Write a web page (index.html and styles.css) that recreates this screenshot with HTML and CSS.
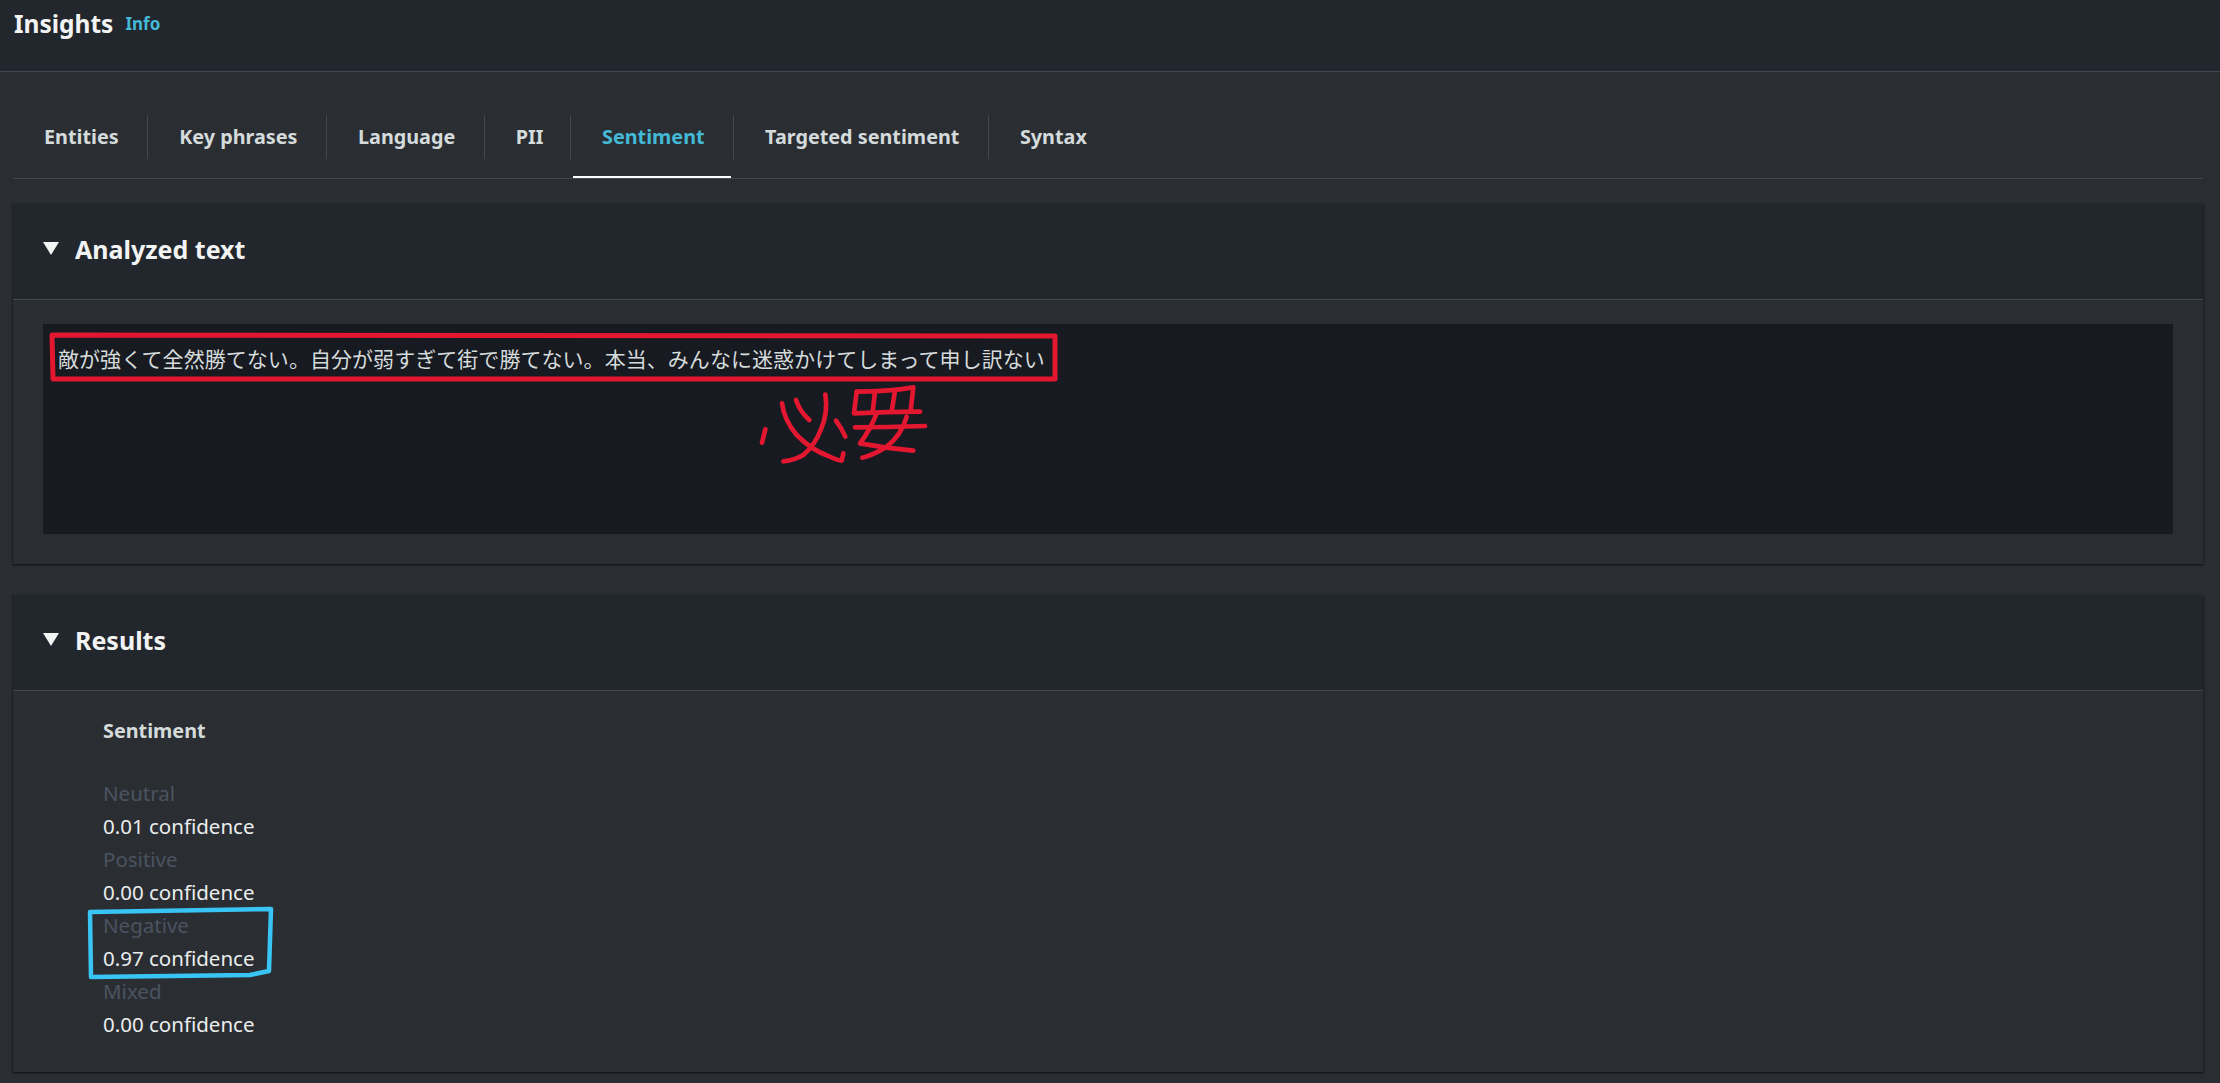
FILE: index.html
```html
<!DOCTYPE html>
<html lang="en">
  <head>
    <title>Insights</title>
    <meta charset="UTF-8" />
    <link rel="stylesheet" href="styles.css">
  </head>
  <body>
    <header class="top">
      <h1>Insights</h1>
      <a class="info">Info</a>
    </header>

    <div class="wrapper">
      <nav class="tabs">
        <a class="tab">Entities</a>
        <a class="tab">Key phrases</a>
        <a class="tab">Language</a>
        <a class="tab short">PII</a>
        <a class="tab active">Sentiment</a>
        <a class="tab">Targeted sentiment</a>
        <a class="tab last">Syntax</a>
      </nav>

      <section class="panel first">
        <div class="panel-head">
          <span class="caret"></span>
          <h2>Analyzed text</h2>
        </div>
        <div class="panel-body">
          <div class="textbox">
            <p>敵が強くて全然勝てない。自分が弱すぎて街で勝てない。本当、みんなに迷惑かけてしまって申し訳ない</p>
            <svg class="mark-red" viewBox="0 0 1020 56">
              <path d="M3 3 L1006 4 L1006 47 L4 47 Z" />
            </svg>
            <svg class="scribble" viewBox="0 0 780 360" role="img" aria-label="必要">
              <path d="M196 178 L186 218" />
              <path d="M246 100 Q252 150 290 195 Q335 240 385 258 Q415 272 425 272 L430 250" />
              <path d="M288 90 Q300 125 328 150" />
              <path d="M376 74 Q385 130 362 180 Q345 225 310 255 Q285 270 250 274" />
              <path d="M408 152 Q425 175 436 200" />
              <path d="M470 65 Q560 65 640 52 L632 122" />
              <path d="M470 65 L462 130 Q560 125 660 125" />
              <path d="M525 65 L518 125" />
              <path d="M585 62 L575 125" />
              <path d="M465 172 Q560 172 675 168" />
              <path d="M530 130 Q510 180 480 220 Q560 235 640 242" />
              <path d="M620 140 Q605 195 560 230 Q520 255 487 263" />
            </svg>
          </div>
        </div>
      </section>

      <section class="panel">
        <div class="panel-head">
          <span class="caret"></span>
          <h2>Results</h2>
        </div>
        <div class="results">
          <h3>Sentiment</h3>
          <dl>
            <dt>Neutral</dt>
            <dd>0.01 confidence</dd>
            <dt>Positive</dt>
            <dd>0.00 confidence</dd>
            <dt>Negative</dt>
            <dd>0.97 confidence</dd>
            <dt>Mixed</dt>
            <dd>0.00 confidence</dd>
          </dl>
          <svg class="mark-blue" viewBox="0 0 190 74">
            <path d="M3 6 L184 3 L182 65 L163 69 L4 71 Z" />
          </svg>
        </div>
      </section>
    </div>
  </body>
</html>
```

FILE: styles.css
```css
html,
body {
  margin: 0;
  padding: 0;
}
body {
  height: 1083px;
  overflow: hidden;
  background: #2a2e33;
  color: #d5dbdb;
  font-family: "Noto Sans", "Noto Sans CJK JP", sans-serif;
}
.top {
  display: flex;
  align-items: center;
  gap: 12px;
  height: 46px;
  padding: 0 14px 25px;
  background: #22262d;
  border-bottom: 1px solid #434850;
}
h1 {
  margin: 0;
  font-size: 24.5px;
  font-weight: 700;
  color: #f2f3f3;
}
.info {
  font-size: 17px;
  font-weight: 700;
  color: #44b9d6;
}
.wrapper {
  padding: 43px 17px 0 13px;
}
.tabs {
  display: flex;
  height: 63px;
  border-bottom: 1px solid #414750;
}
.tab {
  position: relative;
  height: 44px;
  line-height: 44px;
  padding: 0 28.5px 0 31px;
  border-right: 1px solid #414750;
  font-size: 19.8px;
  font-weight: 700;
  color: #d5dbdb;
}
.tab.short {
  padding-right: 26.5px;
}
.tab.last {
  border-right: 0;
}
.tab.active {
  color: #44b9d6;
}
.tab.active:after {
  content: "";
  position: absolute;
  left: 2px;
  right: 2px;
  bottom: -19px;
  height: 2px;
  background: #fff;
}
.panel {
  margin-top: 31px;
  background: #2a2e33;
  box-shadow: 0 1px 1px #14171b, 1px 1px 2px #1c1f24, -1px 0 1px #22252a;
}
.panel.first {
  margin-top: 25px;
}
.panel-head {
  display: flex;
  align-items: center;
  gap: 16px;
  height: 89px;
  padding: 0 0 6px 30px;
  background: #22262d;
  border-bottom: 1px solid #434850;
}
.caret {
  width: 0;
  height: 0;
  border-left: 8px solid transparent;
  border-right: 8px solid transparent;
  border-top: 13px solid #f2f3f3;
}
h2 {
  margin: 0;
  font-size: 25px;
  font-weight: 700;
  color: #f2f3f3;
}
.panel-body {
  padding: 24px 30px 30px;
}
.textbox {
  position: relative;
  height: 210px;
  background: #171a21;
}
.textbox p {
  margin: 0;
  padding: 18px 0 0 15px;
  font-family: "Noto Sans CJK JP", sans-serif;
  font-size: 21px;
  letter-spacing: 0.05px;
  line-height: 32px;
  white-space: nowrap;
  color: #d5dbdb;
}
.mark-red,
.mark-blue,
.scribble {
  position: absolute;
  fill: none;
  stroke-linecap: round;
  stroke-linejoin: round;
}
.mark-red {
  left: 6px;
  top: 8px;
  width: 1020px;
  height: 56px;
  stroke: #e3172f;
  stroke-width: 5;
}
.scribble {
  left: 657px;
  top: 46px;
  width: 260px;
  height: 120px;
  stroke: #e3172f;
  stroke-width: 14;
}
.results {
  position: relative;
  height: 381px;
  box-sizing: border-box;
  padding: 26px 0 0 90px;
}
h3 {
  margin: 0;
  font-size: 19.8px;
  line-height: 28px;
  font-weight: 700;
  color: #d5dbdb;
}
dl {
  margin: 32px 0 0;
  font-size: 20.5px;
  line-height: 33px;
}
dt {
  color: #4b5360;
}
dd {
  margin: 0;
  color: #eaeded;
}
.mark-blue {
  left: 74px;
  top: 215px;
  width: 190px;
  height: 74px;
  stroke: #38c5f5;
  stroke-width: 4.5;
}
```
